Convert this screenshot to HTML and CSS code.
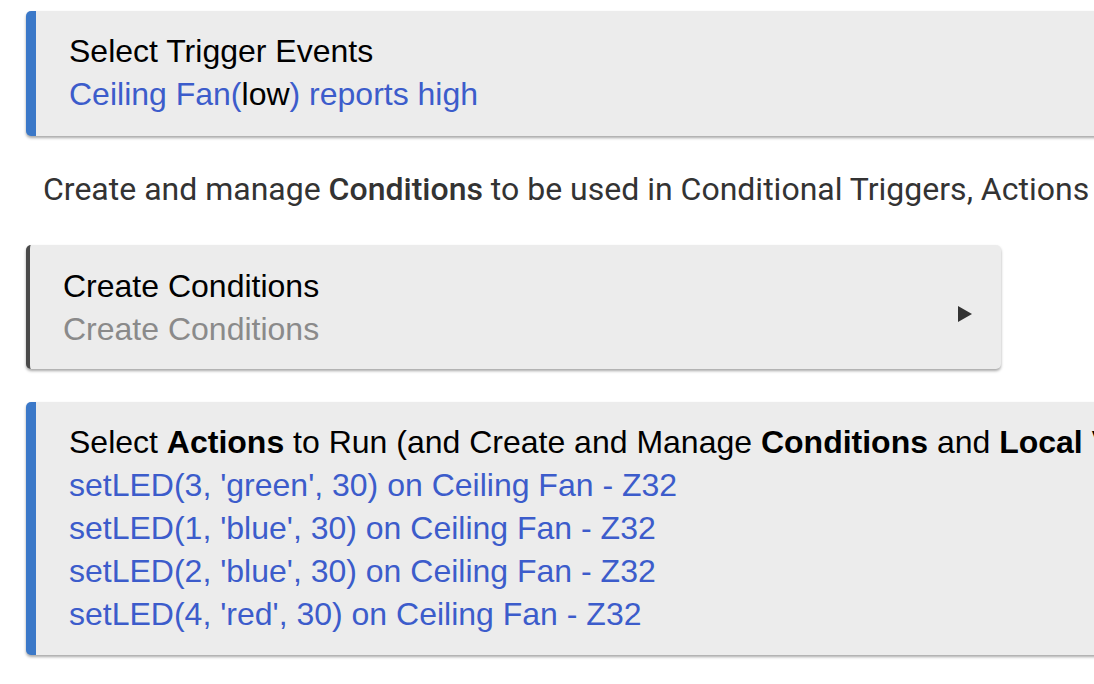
FILE: index.html
```html
<!DOCTYPE html>
<html>
<head>
<meta charset="utf-8">
<link rel="stylesheet" href="styles.css">
</head>
<body>
<div class="page">
  <div class="card card-blue card-wide card-trigger">
    <div class="title">Select Trigger Events</div>
    <div class="link">Ceiling Fan(<span class="plain">low</span>) reports high</div>
  </div>
  <p class="note">Create and manage <b>Conditions</b> to be used in Conditional Triggers, Actions</p>
  <div class="card card-gray card-narrow">
    <div class="body">
      <div class="title">Create Conditions</div>
      <div class="sub">Create Conditions</div>
    </div>
    <div class="arrow"></div>
  </div>
  <div class="card card-blue card-wide card-actions">
    <div class="title">Select <b>Actions</b> to Run (and Create and Manage <b>Conditions</b> and <b>Local Variables</b>)</div>
    <div class="link">setLED(3, 'green', 30) on Ceiling Fan - Z32</div>
    <div class="link">setLED(1, 'blue', 30) on Ceiling Fan - Z32</div>
    <div class="link">setLED(2, 'blue', 30) on Ceiling Fan - Z32</div>
    <div class="link">setLED(4, 'red', 30) on Ceiling Fan - Z32</div>
  </div>
</div>
</body>
</html>
```
FILE: styles.css
```css
html, body {
  margin: 0;
  padding: 0;
  background: #ffffff;
  overflow: hidden;
  width: 1094px;
  height: 684px;
}
.page {
  padding: 11px 0 0 26px;
  display: flex;
  flex-direction: column;
  align-items: flex-start;
}
.card {
  background: #ececec;
  border-radius: 5px;
  box-shadow: 0 2px 3px rgba(0, 0, 0, 0.35);
  font-family: "Liberation Sans", Arial, sans-serif;
  font-size: 32px;
  line-height: 43px;
  box-sizing: border-box;
  white-space: nowrap;
}
.card-blue {
  border-left: 10px solid #3b78c8;
  padding: 19px 33px 20px 33px;
}
.card-wide {
  width: 1200px;
}
.card-gray {
  border-left: 4px solid #4a4a4a;
  padding: 20px 0 18px 33px;
  width: 975px;
  display: flex;
  align-items: center;
}
.card-gray .body {
  flex: 1;
}
.title {
  color: #000;
}
.title b {
  font-weight: bold;
}
.link {
  color: #3c5ccb;
}
.plain {
  color: #000;
}
.sub {
  color: #8a8a8a;
}
.arrow {
  width: 0;
  height: 0;
  border-top: 8px solid transparent;
  border-bottom: 8px solid transparent;
  border-left: 14px solid #333;
  margin-right: 29px;
  margin-top: 12px;
}
.note {
  font-family: Roboto, "Liberation Sans", sans-serif;
  font-size: 32px;
  line-height: 40px;
  color: #333;
  margin: 33px 0 36px 17px;
  white-space: nowrap;
}
.note b {
  font-weight: 500;
}
.card-actions {
  margin-top: 33px;
  padding-top: 19px;
  padding-bottom: 19px;
}
```
